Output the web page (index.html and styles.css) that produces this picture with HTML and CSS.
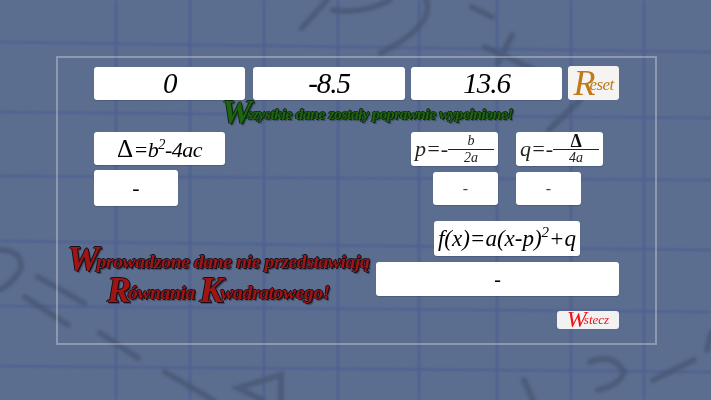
FILE: index.html
```html
<!DOCTYPE html>
<html lang="pl">
<head>
<meta charset="utf-8">
<title>Równanie kwadratowe</title>
<link rel="stylesheet" href="styles.css">
</head>
<body>
<svg class="backdrop" width="711" height="400" viewBox="0 0 711 400" aria-hidden="true">
  <defs>
    <filter id="soft" x="-5%" y="-5%" width="110%" height="110%"><feGaussianBlur stdDeviation="1.4"/></filter>
    <filter id="softer" x="-5%" y="-5%" width="110%" height="110%"><feGaussianBlur stdDeviation="1"/></filter>
  </defs>
  <g class="grid" filter="url(#softer)">
    <path d="M116 0V400M190 0V400M264 0V400M338 0V400M419 0V400M497 0V400M571 0V400M644 0V400"/>
    <path d="M0 42L711 52M0 112L711 118M0 176L711 180M0 241L711 250M0 306L711 312M0 366L711 372"/>
  </g>
  <g class="ink" filter="url(#soft)">
    <path d="M302 28L327 0M333 10Q365 14 390 0M426 0Q436 24 381 53"/>
    <path d="M472 7L492 17M512 35L498 63M485 47L535 70M580 100L549 130"/>
    <path d="M0 250Q22 250 21 268Q16 280 0 290M38 277L84 303M25 297L68 325M100 333L138 358M165 372L213 400"/>
    <path d="M281 400V375L238 388L262 400"/>
    <path d="M590 362Q612 352 624 372Q620 385 598 390M524 380L533 400M653 380L694 360M707 350L711 333"/>
  </g>
</svg>
<main class="frame">
  <div class="coefficients">
    <div class="field">0</div>
    <div class="field">-8.5</div>
    <div class="field narrow-gap">13.6</div>
    <button class="reset"><span class="swash">R</span>eset</button>
  </div>
  <p class="success"><span class="swash">W</span>szystkie dane zostały poprawnie wypełnione!</p>
  <div class="formulas">
    <div class="delta-col">
      <div class="formula delta-formula"><span><span class="tri">Δ</span>=b<sup>2</sup>-4ac</span></div>
      <div class="answer delta-answer">-</div>
    </div>
    <div class="p-col">
      <div class="formula frac-formula">
        <span>p=-</span>
        <span class="frac"><span class="num">b</span><span class="den">2a</span></span>
      </div>
      <div class="answer small-answer">-</div>
    </div>
    <div class="q-col">
      <div class="formula frac-formula">
        <span>q=-</span>
        <span class="frac"><span class="num tri-num">Δ</span><span class="den">4a</span></span>
      </div>
      <div class="answer small-answer">-</div>
    </div>
  </div>
  <div class="bottom">
    <p class="error"><span class="swash">W</span>prowadzone dane nie przedstawiają<br><span class="swash">R</span>ównania <span class="swash">K</span>wadratowego!</p>
    <div class="canonical">
      <div class="formula canonical-formula"><span>f(x)=a(x-p)<sup>2</sup>+q</span></div>
      <div class="answer canonical-answer">-</div>
      <button class="back"><span class="swash">W</span>stecz</button>
    </div>
  </div>
</main>
</body>
</html>
```
FILE: styles.css
```css
* { box-sizing: border-box; }
html, body { margin: 0; height: 100%; }
body {
  position: relative;
  width: 711px;
  height: 400px;
  overflow: hidden;
  background: #5c6e90;
  font-family: "Liberation Serif", serif;
  font-style: italic;
  color: #000;
  padding: 56px 54px 0 56px;
}
.backdrop { position: absolute; left: 0; top: 0; }
.grid path { fill: none; stroke: #4e6090; stroke-width: 3; opacity: .75; }
.ink path { fill: none; stroke: #465673; stroke-width: 6; stroke-linecap: round; opacity: .75; }

.frame {
  position: relative;
  width: 601px;
  height: 289px;
  border: 2px solid rgba(255, 255, 255, .3);
  padding: 8px 36px 0;
}

.coefficients { display: flex; align-items: flex-end; height: 34px; gap: 8px; }
.field, .answer, .formula {
  background: #fff;
  border-radius: 3px;
  display: flex;
  align-items: center;
  justify-content: center;
  box-shadow: 0 1px 1px rgba(40, 50, 80, .3);
  white-space: nowrap;
}
.field { width: 152px; height: 33px; font-size: 29px; letter-spacing: -1px; }
.narrow-gap { margin-left: -2px; }
.reset {
  width: 51px;
  height: 34px;
  margin-left: -2px;
  border: 0;
  border-radius: 3px;
  padding: 0;
  background: #f5f4f3;
  color: #c07a1c;
  font: italic 17px "Liberation Serif", serif;
  letter-spacing: -.5px;
}
.reset .swash { font-size: 36px; line-height: 30px; vertical-align: -5px; letter-spacing: -6px; }

.success, .error { margin: 0; font-weight: bold; }
.success {
  height: 32px;
  padding-left: 22px;
  text-align: center;
  line-height: 28px;
  font-size: 15.5px;
  letter-spacing: -.4px;
  color: #1f6410;
  text-shadow: -1px 0 #102a12, 1px 0 #102a12, 0 -1px #102a12, 1px 1px #102a12, 2px 2px 1px #3c4a60;
}
.success .swash { font-size: 34px; line-height: 20px; vertical-align: -4px; letter-spacing: -5px; }

.formulas { display: flex; height: 74px; }
.formula { font-size: 22px; }
.delta-col { width: 131px; }
.delta-formula { width: 131px; height: 33px; letter-spacing: -.5px; }
.delta-formula .tri { font-style: normal; font-size: 25px; margin-right: 1px; }
.delta-answer { width: 84px; height: 36px; margin-top: 5px; font-size: 22px; }
.p-col { width: 87px; margin-left: 186px; display: flex; flex-direction: column; align-items: flex-end; }
.q-col { width: 87px; margin-left: 18px; display: flex; flex-direction: column; align-items: flex-start; }
.frac-formula { width: 87px; height: 34px; font-size: 22px; color: #222; padding: 0 4px; }
.frac {
  flex: 1;
  display: flex;
  flex-direction: column;
  align-items: center;
  font-size: 14px;
  line-height: 16px;
}
.num { width: 100%; text-align: center; border-bottom: 1px solid #222; line-height: 16px; }
.tri-num { font-style: normal; font-weight: bold; font-size: 18px; color: #111; }
.small-answer { width: 65px; height: 33px; margin-top: 6px; font-size: 16px; color: #444; }

.bottom { display: flex; margin: 15px 0 0 -29px; }
.error {
  width: 311px;
  padding: 25px 4px 0 0;
  text-align: center;
  font-size: 19.5px;
  line-height: 31px;
  letter-spacing: -.35px;
  color: #a01414;
  text-shadow: -1px 0 #181018, 1px 0 #181018, 0 -1px #181018, 1px 1px #181018, 2px 2px 1px #3c4a60;
}
.error .swash { font-size: 36px; line-height: 20px; vertical-align: -3px; letter-spacing: -3px; }
.canonical { width: 243px; display: flex; flex-direction: column; }
.canonical-formula { width: 146px; height: 35px; margin-left: 58px; font-size: 23px; }
.canonical-answer { width: 243px; height: 34px; margin-top: 6px; font-size: 20px; }
.back {
  align-self: flex-end;
  width: 62px;
  height: 18px;
  margin-top: 15px;
  border: 0;
  border-radius: 3px;
  padding: 0;
  background: #f3f2f2;
  color: #f01414;
  font: italic 13px/18px "Liberation Serif", serif;
  white-space: nowrap;
}
.back .swash { font-size: 24px; line-height: 14px; vertical-align: -3px; letter-spacing: -3px; }
sup { font-size: .65em; line-height: 0; }
```
